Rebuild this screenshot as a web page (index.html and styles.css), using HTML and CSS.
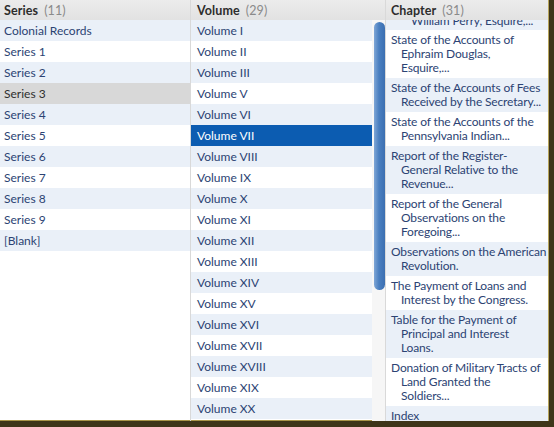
FILE: index.html
```html
<!DOCTYPE html>
<html>
<head>
<meta charset="utf-8">
<link rel="stylesheet" href="styles.css">
</head>
<body>
<div class="frame">
  <div class="browser">
    <div class="col series">
      <div class="head"><b>Series</b><span class="count">(11)</span></div>
      <ul class="list">
        <li>Colonial Records</li>
        <li>Series 1</li>
        <li>Series 2</li>
        <li class="current">Series 3</li>
        <li>Series 4</li>
        <li>Series 5</li>
        <li>Series 6</li>
        <li>Series 7</li>
        <li>Series 8</li>
        <li>Series 9</li>
        <li>[Blank]</li>
      </ul>
    </div>
    <div class="col volume">
      <div class="head"><b>Volume</b><span class="count">(29)</span></div>
      <div class="body">
        <ul class="list">
          <li>Volume I</li>
          <li>Volume II</li>
          <li>Volume III</li>
          <li>Volume V</li>
          <li>Volume VI</li>
          <li class="selected">Volume VII</li>
          <li>Volume VIII</li>
          <li>Volume IX</li>
          <li>Volume X</li>
          <li>Volume XI</li>
          <li>Volume XII</li>
          <li>Volume XIII</li>
          <li>Volume XIV</li>
          <li>Volume XV</li>
          <li>Volume XVI</li>
          <li>Volume XVII</li>
          <li>Volume XVIII</li>
          <li>Volume XIX</li>
          <li>Volume XX</li>
        </ul>
        <div class="track"><div class="thumb"></div></div>
      </div>
    </div>
    <div class="col chapter">
      <div class="head"><b>Chapter</b><span class="count">(31)</span></div>
      <div class="body">
        <ul class="list chapters">
          <li class="clipped"><span>William Perry, Esquire,...</span></li>
          <li>State of the Accounts of<br>Ephraim Douglas,<br>Esquire,...</li>
          <li>State of the Accounts of Fees<br>Received by the Secretary...</li>
          <li>State of the Accounts of the<br>Pennsylvania Indian...</li>
          <li>Report of the Register-<br>General Relative to the<br>Revenue...</li>
          <li>Report of the General<br>Observations on the<br>Foregoing...</li>
          <li>Observations on the American<br>Revolution.</li>
          <li>The Payment of Loans and<br>Interest by the Congress.</li>
          <li>Table for the Payment of<br>Principal and Interest<br>Loans.</li>
          <li>Donation of Military Tracts of<br>Land Granted the<br>Soldiers...</li>
          <li>Index</li>
        </ul>
      </div>
    </div>
  </div>
</div>
</body>
</html>
```
FILE: styles.css
```css
* { box-sizing: border-box; }
html, body { margin: 0; padding: 0; background: #fff; }
body { font-family: Lato, "Open Sans", sans-serif; font-size: 12px; }

.frame {
  width: 554px;
  height: 427px;
  border-right: 5px solid #3e3519;
  border-bottom: 6px solid #3e3519;
  box-shadow: inset -1px -1px 0 #a89448;
  overflow: hidden;
}
.browser {
  display: flex;
  height: 100%;
  overflow: hidden;
}
.col {
  display: flex;
  flex-direction: column;
  overflow: hidden;
  border-right: 1px solid #d9d9d9;
}
.series { width: 191px; }
.volume { width: 195px; }
.chapter { flex: 1; border-right: 1px solid #b8a55c; }

.head {
  height: 20px;
  flex: none;
  background: linear-gradient(#ececec, #e2e2e2);
  color: #333;
  display: flex;
  align-items: center;
  gap: 6px;
  padding-left: 4px;
  font-size: 12.5px;
  letter-spacing: 0.1px;
}
.volume .head { padding-left: 6px; }
.chapter .head { padding-left: 5px; }
.head b { font-weight: 700; color: #2d2d2d; }
.count { color: #8a8a8a; font-weight: 400; }

.list {
  list-style: none;
  margin: 0;
  padding: 0;
}
.list li {
  height: 21px;
  line-height: 21px;
  padding-left: 4px;
  color: #2c4373;
  white-space: nowrap;
  overflow: hidden;
}
.list li:nth-child(odd) { background: #eaf0f8; }
.list li:nth-child(even) { background: #fff; }
.list li.current { background: #d8d8d8; color: #2f2f2f; }
.list li.selected { background: #0c5cb1; color: #fff; }

.body {
  flex: 1;
  display: flex;
  overflow: hidden;
}
.volume .list { width: 181px; flex: none; }
.volume .list li { padding-left: 6px; }
.track {
  flex: 1;
  background: #f6f6f6;
  padding: 2px 1px 0 2px;
}
.thumb {
  width: 11px;
  height: 268px;
  border-radius: 6px;
  background: linear-gradient(90deg, #7fa6d6, #4a7fc0 45%, #3c6fb1);
}

.chapter .list { width: 100%; }
.chapters li {
  height: auto;
  line-height: 14px;
  padding: 3px 4px 3px 15px;
  text-indent: -10px;
  white-space: nowrap;
  letter-spacing: -0.15px;
}
.chapters li.clipped {
  height: 10px;
  padding: 0 4px 0 25px;
  text-indent: 0;
  line-height: 1px;
}
.chapters li.clipped span { display: inline-block; line-height: 14px; transform: translateY(-6px); }
```
